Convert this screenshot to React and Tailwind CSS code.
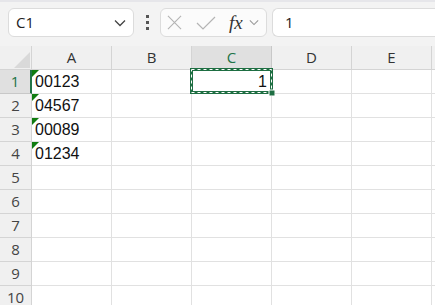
import { Fragment } from 'react';

const cols = ['A', 'B', 'C', 'D', 'E', ''];
const rows = Array.from({ length: 10 }, (_, i) => i + 1);
const values = { 1: '00123', 2: '04567', 3: '00089', 4: '01234' };

function Chevron({ className }) {
  return (
    <svg viewBox="0 0 12 8" className={className} fill="none" stroke="currentColor" strokeWidth="1.3">
      <path d="M1 1.5 L6 6.5 L11 1.5" />
    </svg>
  );
}

function TextFlag() {
  return (
    <svg viewBox="0 0 7 7" className="absolute left-0 top-0 w-[7px] h-[7px]">
      <path d="M0 0 H7 L0 7 Z" fill="#107c10" />
    </svg>
  );
}

export default function App() {
  return (
    <div className="w-[435px] h-[305px] overflow-hidden bg-white font-['Liberation_Sans',sans-serif] relative">
      {/* formula bar */}
      <div className="h-[46px] bg-[#f3f3f3] border-t-[2px] border-[#e6e6ea] flex items-start pt-[6px] pl-2">
        <div className="w-[126px] h-[29px] bg-white border border-[#dcdcdc] rounded-[6px] flex items-center justify-between pl-[7px] pr-[7px]">
          <span className="text-[15px] text-[#222] font-['Open_Sans',sans-serif]">C1</span>
          <Chevron className="w-[12px] h-[8px] text-[#444]" />
        </div>
        <div className="w-[26px] h-[29px] flex flex-col items-center justify-center gap-[3px]">
          <span className="w-[3px] h-[3px] bg-[#555]" />
          <span className="w-[3px] h-[3px] bg-[#555]" />
          <span className="w-[3px] h-[3px] bg-[#555]" />
        </div>
        <div className="w-[107px] h-[29px] bg-[#fbfbfb] border border-[#dcdcdc] rounded-[6px] flex items-center pl-[6px] pr-[4px]">
          <svg viewBox="0 0 16 16" className="w-[15px] h-[15px]" fill="none" stroke="#b4b4b4" strokeWidth="1.2">
            <path d="M1 1 L15 15 M15 1 L1 15" />
          </svg>
          <svg viewBox="0 0 20 14" className="w-[20px] h-[14px] ml-[14px]" fill="none" stroke="#b4b4b4" strokeWidth="1.2">
            <path d="M1 7 L7 13 L19 1" />
          </svg>
          <span className="ml-[13px] italic text-[19px] leading-none text-[#333] font-['Liberation_Serif',serif]">fx</span>
          <Chevron className="w-[10px] h-[7px] ml-[6px] text-[#999]" />
        </div>
        <div className="ml-[5px] flex-1 h-[29px] bg-white border border-r-0 border-[#dcdcdc] rounded-l-[6px] flex items-center pl-[12px]">
          <span className="text-[15px] text-[#222] font-['Open_Sans',sans-serif]">1</span>
        </div>
      </div>

      {/* grid */}
      <div className="grid grid-cols-[32px_repeat(6,80px)] auto-rows-[24px] font-['Open_Sans',sans-serif]">
        <div className="relative bg-[#f0f0f0] border-r border-b border-[#d4d4d4]">
          <svg viewBox="0 0 16 16" className="absolute right-[1px] bottom-[1px] w-[16px] h-[16px]">
            <path d="M16 0 V16 H0 Z" fill="#d9d9d9" />
          </svg>
        </div>
        {cols.map((c, i) => (
          <div
            key={i}
            className={`flex items-center justify-center text-[15px] border-r border-b ${
              c === 'C'
                ? 'bg-[#e0e0e0] text-[#217346] border-[#c8c8c8]'
                : 'bg-[#f0f0f0] text-[#333] border-[#d4d4d4]'
            }`}
          >
            {c}
          </div>
        ))}
        {rows.map((r) => (
          <Fragment key={r}>
            <div
              className={`flex items-center justify-center text-[15px] border-b ${
                r === 1
                  ? 'bg-[#e0e0e0] text-[#217346] border-r-[2px] border-r-[#217346] border-b-[#c8c8c8]'
                  : 'bg-[#f0f0f0] text-[#444] border-r border-[#d4d4d4]'
              }`}
            >
              {r}
            </div>
            {cols.map((c, i) => (
              <div key={i} className="relative border-r border-b border-[#e1e1e1] flex items-center">
                {c === 'A' && values[r] && (
                  <>
                    <TextFlag />
                    <span className="pl-[3px] text-[16px] text-[#111] font-['Liberation_Sans',sans-serif]">{values[r]}</span>
                  </>
                )}
                {c === 'C' && r === 1 && (
                  <span className="ml-auto pr-[4px] text-[16px] text-[#111] font-['Liberation_Sans',sans-serif]">1</span>
                )}
              </div>
            ))}
          </Fragment>
        ))}
      </div>

      {/* copy marquee around C1 */}
      <svg className="absolute left-[190px] top-[68px] w-[85px] h-[28px] pointer-events-none" viewBox="0 0 85 28">
        <rect x="1.5" y="1.5" width="80" height="23" fill="none" stroke="#1e6e42" strokeWidth="3" />
        <rect x="1.5" y="1.5" width="80" height="23" fill="none" stroke="#ffffff" strokeWidth="1" strokeDasharray="3 3" />
        <rect x="79" y="22" width="6" height="6" fill="#1e6e42" stroke="#ffffff" strokeWidth="1" />
      </svg>
    </div>
  );
}
